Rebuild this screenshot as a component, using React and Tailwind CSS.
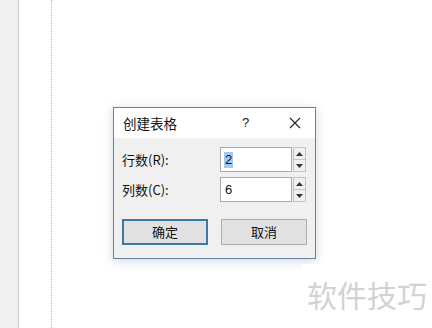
import React from "react";

const font = { fontFamily: '"Noto Sans CJK SC", "Microsoft YaHei", sans-serif' };

function Spinner() {
  return (
    <div className="ml-px flex h-[25px] w-[13px] flex-col border border-[#c4c4c4] bg-[#f0f0f0]">
      <div className="flex flex-1 items-center justify-center border-b border-[#c4c4c4]">
        <svg width="7" height="4" viewBox="0 0 7 4"><path d="M0 4 L3.5 0 L7 4 Z" fill="#333" /></svg>
      </div>
      <div className="flex flex-1 items-center justify-center">
        <svg width="7" height="4" viewBox="0 0 7 4"><path d="M0 0 L3.5 4 L7 0 Z" fill="#333" /></svg>
      </div>
    </div>
  );
}

export default function App() {
  return (
    <div className="relative flex h-[328px] w-[432px] overflow-hidden bg-white" style={font}>
      <div className="h-full w-[19px] border-r border-[#c9c9c9] bg-[#f0f0f0]" />
      <div className="ml-[32px] h-full border-l border-dotted border-[#b8b8b8]" />

      <div className="absolute left-[113px] top-[107px] flex h-[152px] w-[203px] flex-col border border-[#6482a2] bg-[#f0f0f0] shadow-[0_2px_10px_rgba(120,140,170,0.35)]">
        <div className="flex h-[30px] items-center bg-white pl-[9px] text-[13.5px] text-[#111]">
          <span>创建表格</span>
          <span className="ml-[65px] text-[13px]" style={{ fontFamily: '"Liberation Sans", sans-serif' }}>?</span>
          <svg className="ml-[40px]" width="12" height="12" viewBox="0 0 12 12">
            <path d="M1 1 L11 11 M11 1 L1 11" stroke="#222" strokeWidth="1.1" />
          </svg>
        </div>
        <div className="flex flex-1 flex-col px-[8px] pt-[9px] text-[13px] text-[#111]">
          <div className="flex items-center">
            <span className="w-[98px]">行数(R):</span>
            <div className="flex h-[25px] w-[72px] items-center border border-[#a9a9a9] bg-white pl-[3px]">
              <span className="bg-[#9ecbef] px-px leading-[16px]" style={{ fontFamily: '"Liberation Sans", sans-serif', fontSize: 13 }}>2</span>
            </div>
            <Spinner />
          </div>
          <div className="mt-[5px] flex items-center">
            <span className="w-[98px]">列数(C):</span>
            <div className="flex h-[25px] w-[72px] items-center border border-[#a9a9a9] bg-white pl-[4px]">
              <span style={{ fontFamily: '"Liberation Sans", sans-serif', fontSize: 13 }}>6</span>
            </div>
            <Spinner />
          </div>
          <div className="mt-[17px] flex gap-[13px]">
            <div className="flex h-[26px] w-[86px] items-center justify-center border-2 border-[#3a7aa6] bg-[#e1e1e1]">确定</div>
            <div className="flex h-[26px] w-[86px] items-center justify-center border border-[#adadad] bg-[#e1e1e1]">取消</div>
          </div>
        </div>
      </div>

      <div className="absolute left-[302px] top-[264px] flex h-[64px] w-[130px] items-start bg-white pl-[5px] pt-[14px]">
        <span className="text-[30px] leading-[32px] text-[#d2d2d2]">软件技巧</span>
      </div>
    </div>
  );
}
